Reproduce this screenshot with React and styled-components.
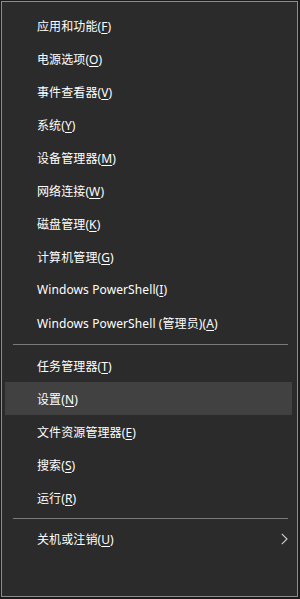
import React from 'react'
import styled, { createGlobalStyle } from 'styled-components'

const Global = createGlobalStyle`
  html, body {
    margin: 0;
    padding: 0;
    background: #1b1b1b;
  }
  body {
    width: 300px;
    height: 599px;
    overflow: hidden;
  }
`

const Menu = styled.div`
  box-sizing: border-box;
  margin: 1px 0 0 1px;
  width: 297px;
  height: 596px;
  background: #2b2b2b;
  border: 1px solid #8c8c8c;
  padding: 7px 5px 0 3px;
  display: flex;
  flex-direction: column;
  font-family: "Noto Sans", "Noto Sans CJK SC", sans-serif;
  font-size: 12px;
  letter-spacing: 0.1px;
  color: #ffffff;
`

const Item = styled.div`
  height: 33px;
  display: flex;
  align-items: center;
  justify-content: space-between;
  padding: 0 4px 0 32px;
  background: ${p => (p.active ? '#414141' : 'transparent')};
  white-space: nowrap;
`

const Key = styled.u`
  text-decoration: underline;
  text-underline-offset: 2px;
`

const Sep = styled.div`
  height: ${p => p.h}px;
  display: flex;
  align-items: center;
  padding: 0 4px 0 8px;
  &::before {
    content: '';
    flex: 1;
    height: 1px;
    background: #7a7a7a;
  }
`

const Chevron = () => (
  <svg width="7" height="12" viewBox="0 0 7 12">
    <path d="M0.8 0.8 L6 6 L0.8 11.2" fill="none" stroke="#d0d0d0" strokeWidth="1.1" />
  </svg>
)

const group1 = [
  ['应用和功能', 'F'],
  ['电源选项', 'O'],
  ['事件查看器', 'V'],
  ['系统', 'Y'],
  ['设备管理器', 'M'],
  ['网络连接', 'W'],
  ['磁盘管理', 'K'],
  ['计算机管理', 'G'],
  ['Windows PowerShell', 'I'],
  ['Windows PowerShell (管理员)', 'A'],
]

const group2 = [
  ['任务管理器', 'T'],
  ['设置', 'N'],
  ['文件资源管理器', 'E'],
  ['搜索', 'S'],
  ['运行', 'R'],
]

const Label = ({ text, k }) => (
  <span>
    {text}(<Key>{k}</Key>)
  </span>
)

export default function App() {
  return (
    <>
      <Global />
      <Menu>
        {group1.map(([t, k]) => (
          <Item key={k}><Label text={t} k={k} /></Item>
        ))}
        <Sep h={10} />
        {group2.map(([t, k]) => (
          <Item key={k} active={k === 'N'}><Label text={t} k={k} /></Item>
        ))}
        <Sep h={8} />
        <Item>
          <Label text="关机或注销" k="U" />
          <Chevron />
        </Item>
      </Menu>
    </>
  )
}
